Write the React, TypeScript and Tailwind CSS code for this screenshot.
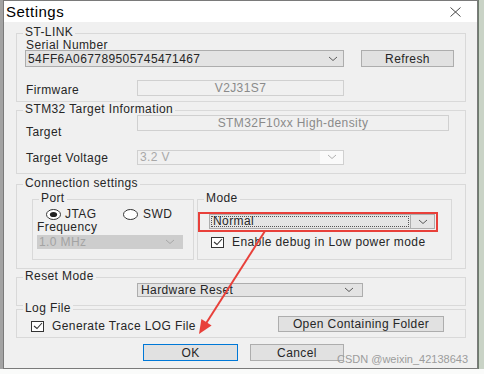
import type { ReactNode } from 'react';

function Chevron({ color = '#5a5a5a' }: { color?: string }) {
  return (
    <svg width="10" height="6" viewBox="0 0 10 6" className="shrink-0">
      <path d="M1 1 L5 4.5 L9 1" fill="none" stroke={color} strokeWidth="1" />
    </svg>
  );
}

function Group({ label, className, children }: { label: string; className: string; children?: ReactNode }) {
  return (
    <div className={`relative border border-[#d9d9d9] ${className}`}>
      <span className="absolute -top-[8px] left-[6px] bg-[#f0f0f0] px-[2px] leading-[12px]">{label}</span>
      {children}
    </div>
  );
}

function CheckBox() {
  return (
    <div className="flex h-[11px] w-[13px] shrink-0 items-center justify-center border border-[#333] bg-white">
      <svg width="10" height="8" viewBox="0 0 10 8">
        <path d="M1 4 L4 6.5 L9 1" fill="none" stroke="#333" strokeWidth="1.1" />
      </svg>
    </div>
  );
}

function Radio({ on }: { on?: boolean }) {
  return (
    <svg width="15" height="11" viewBox="0 0 15 11" className="shrink-0">
      <ellipse cx="7.5" cy="5.5" rx="7" ry="5" fill="white" stroke="#333" strokeWidth="1" />
      {on && <ellipse cx="7.5" cy="5.5" rx="3.6" ry="2.6" fill="#222" />}
    </svg>
  );
}

export default function App() {
  return (
    <div className="relative flex h-[374px] w-[484px] overflow-hidden bg-[#fafbfa] font-['Liberation_Sans',Arial,sans-serif] text-[12px] tracking-[0.4px] text-[#262626]">
      <div className="h-[369px] w-[3px] bg-[#a3a3a3]" />

      {/* dialog */}
      <div className="flex h-[369px] w-[475px] flex-col border border-[#7a7a7a] bg-[#f0f0f0]">
        {/* title bar */}
        <div className="flex h-[21px] shrink-0 items-center justify-between bg-white pl-[2px] pr-[16px]">
          <span className="text-[15px] leading-[18px] tracking-[0.5px] text-black">Settings</span>
          <svg width="11" height="10" viewBox="0 0 11 10">
            <path d="M0.5 0.5 L10.5 9.5 M10.5 0.5 L0.5 9.5" stroke="#333" strokeWidth="0.9" />
          </svg>
        </div>

        <div className="flex flex-col pl-[12px]">
          {/* ST-LINK */}
          <Group label="ST-LINK" className="mt-[11px] h-[69px] w-[450px] pl-[8px]">
            <div className="pl-[1px] pt-[6px] leading-[10px]">Serial Number</div>
            <div className="flex">
              <div className="flex h-[17px] w-[319px] items-center justify-between border border-[#adadad] bg-[#e3e3e3] pl-[2px] pr-[5px]">
                <span>54FF6A067789505745471467</span>
                <Chevron />
              </div>
              <div className="ml-[17px] flex h-[17px] w-[93px] items-center justify-center border border-[#adadad] bg-[#e1e1e1]">
                Refresh
              </div>
            </div>
            <div className="mt-[13px] flex">
              <div className="w-[112px] pl-[1px] pt-[2px] leading-[16px]">Firmware</div>
              <div className="flex h-[16px] w-[207px] items-center justify-center border border-[#d0d0d0] bg-[#f0f0f0] text-[#8a8a8a]">
                V2J31S7
              </div>
            </div>
          </Group>

          {/* STM32 */}
          <Group label="STM32 Target Information" className="mt-[8px] h-[64px] w-[450px] pl-[8px]">
            <div className="mt-[4px] flex h-[16px] items-start">
              <div className="mt-[10px] w-[112px] pl-[1px] leading-[14px]">Target</div>
              <div className="flex h-[16px] w-[312px] items-center justify-center border border-[#d0d0d0] bg-[#f0f0f0] text-[#8a8a8a]">
                STM32F10xx High-density
              </div>
            </div>
            <div className="mt-[19px] flex h-[14px] items-center">
              <div className="w-[112px] pl-[1px] pt-[1px] leading-[14px]">Target Voltage</div>
              <div className="flex h-[15px] w-[207px] items-stretch border border-[#d0d0d0] bg-[#f0f0f0]">
                <span className="flex-1 pl-[2px] leading-[13px] text-[#a8a8a8]">3.2 V</span>
                <span className="flex w-[23px] items-center justify-center bg-[#fafafa]">
                  <Chevron color="#b0b0b0" />
                </span>
              </div>
            </div>
          </Group>

          {/* Connection settings */}
          <Group label="Connection settings" className="mt-[10px] h-[85px] w-[450px] pl-[15px]">
            <div className="mt-[14px] flex gap-[3px]">
              <Group label="Port" className="h-[61px] w-[162px]">
                <div className="ml-[13px] mt-[9px] flex h-[11px] items-center">
                  <div className="flex w-[77px] items-center gap-[4px]">
                    <Radio on />
                    <span className="leading-[11px]">JTAG</span>
                  </div>
                  <div className="flex items-center gap-[5px]">
                    <Radio />
                    <span className="leading-[11px]">SWD</span>
                  </div>
                </div>
                <div className="ml-[4px] mt-[2px] leading-[11px]">Frequency</div>
                <div className="ml-[4px] mt-[2px] flex h-[14px] w-[146px] items-center justify-between bg-[#cdcdcd] pl-[2px] pr-[8px] text-[#a3a3a3]">
                  <span>1.0 MHz</span>
                  <Chevron color="#a8a8a8" />
                </div>
              </Group>

              <Group label="Mode" className="h-[61px] w-[255px]">
                <div className="ml-[11px] mt-[14px] flex h-[15px] w-[226px] border border-[#adadad] bg-[#e5e5e5]">
                  <div className="m-[1px] flex flex-1 items-center border border-dotted border-[#555] pl-[1px] leading-[11px]">
                    Normal
                  </div>
                  <div className="flex w-[24px] items-center justify-center border-l border-[#adadad]">
                    <Chevron />
                  </div>
                </div>
                <div className="ml-[13px] mt-[7px] flex items-center gap-[8px]">
                  <CheckBox />
                  <span className="leading-[12px]">Enable debug in Low power mode</span>
                </div>
                {/* annotation box */}
                <div className="absolute left-0 top-[12px] h-[20px] w-[240px] border-2 border-[#e8403a]" />
              </Group>
            </div>
          </Group>

          {/* Reset Mode */}
          <Group label="Reset Mode" className="mt-[8px] h-[29px] w-[450px]">
            <div className="ml-[120px] mt-[5px] flex h-[14px] w-[226px] items-center justify-between border border-[#adadad] bg-[#e3e3e3] pl-[3px] pr-[8px]">
              <span className="leading-[12px]">Hardware Reset</span>
              <Chevron />
            </div>
          </Group>

          {/* Log File */}
          <Group label="Log File" className="mt-[3px] flex h-[29px] w-[450px] items-start">
            <div className="ml-[14px] mt-[10px] flex items-center gap-[8px]">
              <CheckBox />
              <span className="leading-[12px]">Generate Trace LOG File</span>
            </div>
            <div className="ml-auto mr-[21px] mt-[6px] flex h-[16px] w-[166px] items-center justify-center border border-[#adadad] bg-[#e1e1e1]">
              Open Containing Folder
            </div>
          </Group>

          {/* buttons */}
          <div className="ml-[127px] mt-[6px] flex gap-[12px]">
            <div className="flex h-[17px] w-[95px] items-center justify-center border border-[#0078d7] bg-[#e1e1e1]">
              OK
            </div>
            <div className="flex h-[17px] w-[94px] items-center justify-center border border-[#adadad] bg-[#e1e1e1]">
              Cancel
            </div>
          </div>
        </div>
      </div>

      <div className="h-[369px] flex-1 border-l border-[#6f7d6f] bg-[#c9d3c6]" />

      {/* annotation arrow */}
      <svg className="pointer-events-none absolute left-0 top-0" width="484" height="374" viewBox="0 0 484 374">
        <line x1="265" y1="231" x2="205" y2="325" stroke="#e8403a" strokeWidth="2" />
        <polygon points="199,334 211.6,325.4 201.4,319" fill="#e8403a" />
      </svg>

      {/* watermark */}
      <span className="pointer-events-none absolute left-[337px] top-[352px] whitespace-nowrap text-[11px] leading-[14px] tracking-normal text-[#9c9c9c]">
        CSDN @weixin_42138643
      </span>
    </div>
  );
}
